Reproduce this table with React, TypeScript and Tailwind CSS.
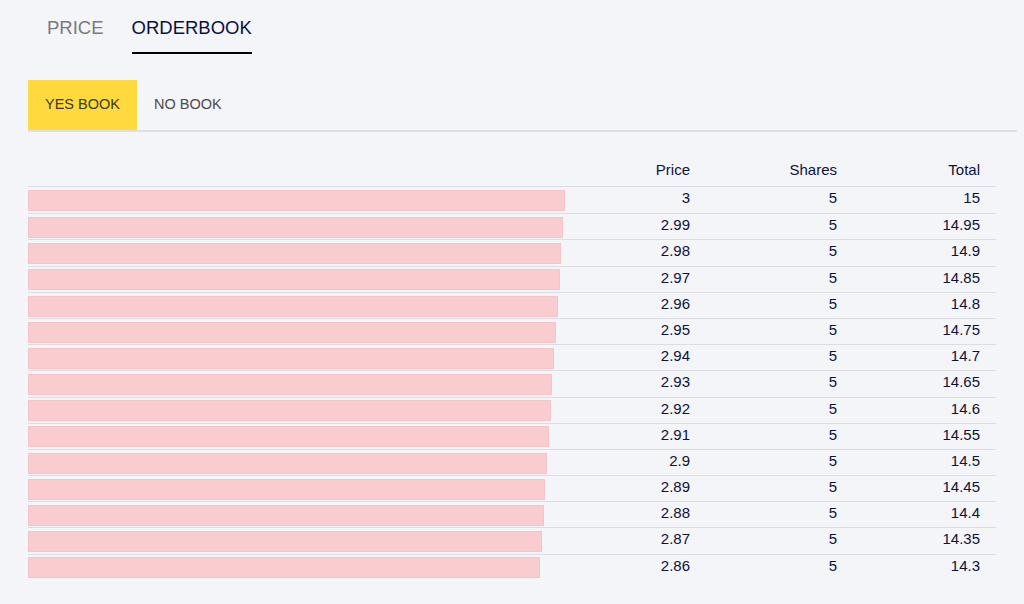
import React from "react";

const rows = [
  { price: "3", shares: 5, total: 15 },
  { price: "2.99", shares: 5, total: 14.95 },
  { price: "2.98", shares: 5, total: 14.9 },
  { price: "2.97", shares: 5, total: 14.85 },
  { price: "2.96", shares: 5, total: 14.8 },
  { price: "2.95", shares: 5, total: 14.75 },
  { price: "2.94", shares: 5, total: 14.7 },
  { price: "2.93", shares: 5, total: 14.65 },
  { price: "2.92", shares: 5, total: 14.6 },
  { price: "2.91", shares: 5, total: 14.55 },
  { price: "2.9", shares: 5, total: 14.5 },
  { price: "2.89", shares: 5, total: 14.45 },
  { price: "2.88", shares: 5, total: 14.4 },
  { price: "2.87", shares: 5, total: 14.35 },
  { price: "2.86", shares: 5, total: 14.3 },
];

const maxTotal = 15;

export default function App() {
  return (
    <div
      className="min-h-[604px] w-full bg-[#f4f5f9] pl-[28px] pr-[7px]"
      style={{ fontFamily: '"Liberation Sans", Arial, sans-serif' }}
    >
      {/* top tabs */}
      <div className="flex gap-[28px] pl-[19px] text-[18.5px]">
        <button className="pt-[17px] pb-[15px] leading-[22px] text-[#7a7a7e]">PRICE</button>
        <button className="pt-[17px] pb-[13px] leading-[22px] text-[#0b1040] border-b-2 border-black">
          ORDERBOOK
        </button>
      </div>

      {/* yes / no book */}
      <div className="mt-[26px] flex border-b-2 border-[#dfe0e5] text-[14.5px]">
        <button className="h-[50px] px-[17px] bg-[#ffda3f] text-[#3b3a2a]">YES BOOK</button>
        <button className="h-[50px] px-[17px] text-[#4a4a50]">NO BOOK</button>
      </div>

      {/* table */}
      <div className="mt-[23px] w-[968px] text-[15px] text-[#0e1236]">
        <div className="grid grid-cols-[537px_141px_147px_143px] h-[32px] items-end pb-[5px] border-b border-[#dcdde2]">
          <div />
          <div className="text-right pr-4">Price</div>
          <div className="text-right pr-4">Shares</div>
          <div className="text-right pr-4">Total</div>
        </div>
        {rows.map((r, i) => (
          <div
            key={r.price}
            className={`grid grid-cols-[537px_141px_147px_143px] h-[26.2px] items-center ${
              i === 0 ? "" : "border-t border-[#dcdde2]"
            }`}
          >
            <div className="h-full flex items-center">
              <div
                className="h-[21px] bg-[#f9cdd0] border border-[#f6c3c7]"
                style={{ width: `${(r.total / maxTotal) * 537}px` }}
              />
            </div>
            <div className="text-right pr-4 pb-[4px]">{r.price}</div>
            <div className="text-right pr-4 pb-[4px]">{r.shares}</div>
            <div className="text-right pr-4 pb-[4px]">{r.total}</div>
          </div>
        ))}
      </div>
    </div>
  );
}
